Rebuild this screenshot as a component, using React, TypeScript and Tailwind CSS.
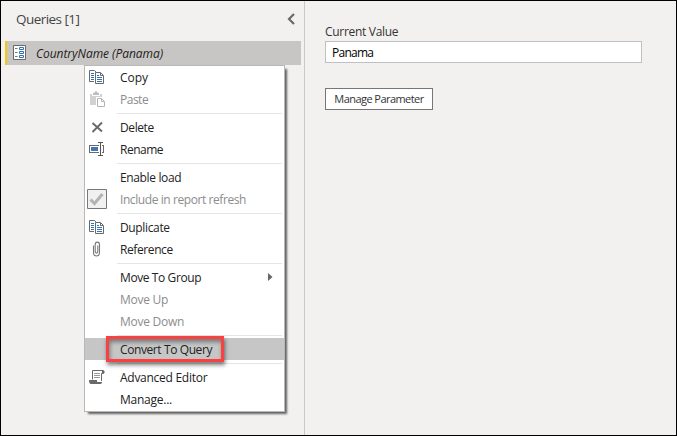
import type { ReactNode } from "react";

function CopyIcon() {
  return (
    <svg className="relative top-px" width="16" height="16" viewBox="0 0 16 16" fill="none">
      <path d="M5 11.5H.5V.5H5.5L7.5 2.5" stroke="#696969" />
      <path d="M2 3.5H5M2 5.5H5M2 7.5H5M2 9.5H5" stroke="#2f73b7" />
      <path d="M6.5 2.5H11.5L14.5 5.5V13.5H6.5Z" fill="#fff" stroke="#696969" />
      <path d="M11.5 3V5.5H14" stroke="#696969" />
      <path d="M8 5.5H10M8 7.5H13M8 9.5H13M8 11.5H13" stroke="#2f73b7" />
    </svg>
  );
}

function PasteIcon() {
  return (
    <svg width="16" height="16" viewBox="0 0 16 16" fill="none">
      <path d="M1 3H3V5H11V3H13V6H7V14H1Z" fill="#d2d2d2" />
      <path d="M4 4V2H5.5V.5H8.5V2H10V4Z" fill="#bdbdbd" />
      <path d="M8.5 7.5H12.5L15.5 10.5V15.5H8.5Z" fill="#fff" stroke="#b5b5b5" />
      <path d="M12.5 7.5V10.5H15.5" stroke="#b5b5b5" />
    </svg>
  );
}

function DeleteIcon() {
  return (
    <svg width="16" height="16" viewBox="0 0 16 16" fill="none">
      <path d="M3.5 4L13 12.5M13 3.5L3.5 13" stroke="#696969" strokeWidth="1.9" />
    </svg>
  );
}

function RenameIcon() {
  return (
    <svg width="16" height="16" viewBox="0 0 16 16" fill="none" shapeRendering="crispEdges">
      <path d="M10 4.5H.5V11.5H10M13 4.5H14.5V11.5H13" stroke="#696969" />
      <path d="M2 6H9V10H2Z" fill="#3e79b5" />
      <path d="M9 1.5H11L11.5 2L12 1.5H14M11.5 2V14M9 14.5H11L11.5 14L12 14.5H14" stroke="#555" />
    </svg>
  );
}

function CheckedBox() {
  return (
    <svg width="20" height="20" viewBox="0 0 20 20" fill="none">
      <path d="M.5.5H19.5V19.5H.5Z" fill="#f0f0f0" stroke="#777" />
      <path d="M3.5 10.5L7.5 14.5L15.5 5" stroke="#b3b3b3" strokeWidth="3" />
    </svg>
  );
}

function ClipIcon() {
  return (
    <svg width="16" height="16" viewBox="0 0 16 16" fill="none">
      <path
        d="M4.5 4.5V11.5C4.5 16.2 10.5 16.2 10.5 11.5V3.5C10.5.3 6.2.3 6.2 3.5V10.5C6.2 12.6 8.8 12.6 8.8 10.5V4.5"
        stroke="#777"
        strokeWidth="1.1"
      />
    </svg>
  );
}

function ScriptIcon() {
  return (
    <svg width="16" height="16" viewBox="0 0 16 16" fill="none">
      <path d="M3.5 10.5V1.5H14C15.6 1.5 15.5 4.5 14 4.5H12.5V12" stroke="#696969" />
      <path d="M13 1.5V4.5H15V2Z" fill="#696969" />
      <path d="M0 11H8V13H13C13 14.2 12.4 15 11.5 15H2C.6 15 0 13.5 0 11Z" fill="#696969" />
      <path d="M5 4.5H11M5 6.5H11M5 8.5H11" stroke="#999" shapeRendering="crispEdges" />
    </svg>
  );
}

function ParameterIcon() {
  return (
    <svg width="13" height="15" viewBox="0 0 13 15" fill="none">
      <path d="M.5.5H12.5V14.5H.5Z" fill="#fff" stroke="#696969" />
      <path d="M2 3.5H4.5M2 7.5H4.5M2 11.5H4.5" stroke="#777" />
      <path d="M6.5 2.5H10.5V4.5H6.5ZM6.5 6.5H10.5V8.5H6.5ZM6.5 10.5H10.5V12.5H6.5Z" stroke="#2f73b7" />
    </svg>
  );
}

type ItemProps = {
  label: string;
  icon?: ReactNode;
  tracking: string;
  disabled?: boolean;
  highlighted?: boolean;
  submenu?: boolean;
};

function Item({ label, icon, tracking, disabled, highlighted, submenu }: ItemProps) {
  return (
    <li
      className={`relative flex h-[22px] items-center ${highlighted ? "bg-[#c6c6c6]" : ""} ${
        disabled ? "text-[#8c8c8c]" : "text-[#222]"
      }`}
    >
      <span className="flex w-[35px] shrink-0 pl-1">{icon}</span>
      <span className={`pt-0.5 whitespace-nowrap ${tracking}`}>{label}</span>
      {submenu && (
        <svg className="mr-[11px] ml-auto" width="5" height="8" viewBox="0 0 5 8">
          <path d="M0 0L4.5 4L0 8Z" fill="#666" />
        </svg>
      )}
      {highlighted && (
        <span className="absolute -top-0.5 left-[21px] h-[26px] w-[118px] border-[3px] border-[#f94141] shadow-[1px_3px_4px_rgba(0,0,0,0.5),inset_1px_3px_4px_rgba(0,0,0,0.4)]" />
      )}
    </li>
  );
}

function Separator() {
  return (
    <li className="flex h-1.5 items-start pt-[3px] pr-0.5 pl-8">
      <span className="h-px w-full bg-[#e5e5e5]" />
    </li>
  );
}

export default function App() {
  return (
    <div className="flex h-[436px] w-[677px] overflow-hidden border border-black bg-[#f3f1f0] font-['Open_Sans',sans-serif] text-xs text-[#333]">
      <aside className="w-[304px] shrink-0 border-r border-[#c8c8c8] pl-1">
        <header className="flex h-10 items-center justify-between pr-2 pb-1 pl-[11px]">
          <h1 className="text-[13.5px] tracking-[-0.55px] text-[#444]">Queries [1]</h1>
          <svg width="9" height="12" viewBox="0 0 9 12" fill="none">
            <path d="M7 1L2 6L7 11" stroke="#696969" strokeWidth="2.2" />
          </svg>
        </header>
        <div className="flex h-6 w-[296px] items-start border-l-2 border-[#f2c811] bg-[#c8c6c4]">
          <span className="mt-1 ml-1.5">
            <ParameterIcon />
          </span>
          <span className="mt-[5px] ml-[10px] tracking-[-0.05px] whitespace-nowrap text-[#222] italic">
            CountryName (Panama)
          </span>
        </div>
        <ul className="relative ml-[79px] h-[347px] w-[201px] border border-[#b8b8b8] bg-white shadow-[3px_3px_2px_-1px_rgba(0,0,0,0.6)]">
          <Item label="Copy" icon={<CopyIcon />} tracking="tracking-normal" />
          <Item label="Paste" icon={<PasteIcon />} tracking="tracking-[-0.5px]" disabled />
          <Separator />
          <Item label="Delete" icon={<DeleteIcon />} tracking="tracking-[-0.4px]" />
          <Item label="Rename" icon={<RenameIcon />} tracking="tracking-[-0.5px]" />
          <Separator />
          <Item label="Enable load" tracking="tracking-[-0.36px]" />
          <Item
            label="Include in report refresh"
            icon={<span className="-ml-0.5"><CheckedBox /></span>}
            tracking="tracking-[-0.42px]"
            disabled
          />
          <Separator />
          <Item label="Duplicate" icon={<CopyIcon />} tracking="tracking-[-0.35px]" />
          <Item label="Reference" icon={<ClipIcon />} tracking="tracking-[-0.4px]" />
          <Separator />
          <Item label="Move To Group" tracking="tracking-[-0.4px]" submenu />
          <Item label="Move Up" tracking="tracking-[-0.25px]" disabled />
          <Item label="Move Down" tracking="tracking-[-0.25px]" disabled />
          <Separator />
          <Item label="Convert To Query" tracking="tracking-[-0.4px]" highlighted />
          <Separator />
          <Item label="Advanced Editor" icon={<ScriptIcon />} tracking="tracking-[-0.27px]" />
          <Item label="Manage..." tracking="tracking-[-0.25px]" />
        </ul>
      </aside>
      <main className="flex flex-col items-start pt-[22px] pl-5">
        <label className="h-[18px] leading-[18px] tracking-[-0.3px]">Current Value</label>
        <div className="flex h-[22px] w-[317px] items-center border border-[#c0c0c0] bg-white pt-0.5 pl-1.5 tracking-[-0.75px] text-black">
          Panama
        </div>
        <button className="mt-[25px] h-[22px] w-[108px] border border-[#777] bg-white text-[11px] tracking-[-0.55px] whitespace-nowrap">
          Manage Parameter
        </button>
      </main>
    </div>
  );
}
